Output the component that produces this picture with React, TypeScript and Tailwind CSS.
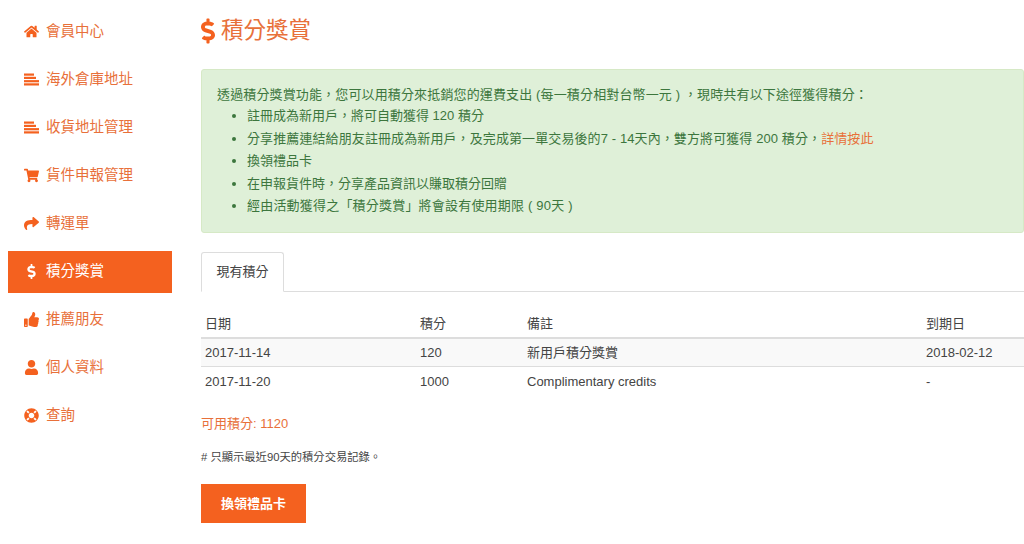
import { FaHome, FaShoppingCart, FaShare, FaDollarSign, FaThumbsUp, FaUser, FaLifeRing } from "react-icons/fa";

const font = "font-['Liberation_Sans','Noto_Sans_CJK_TC',sans-serif]";

function Bars({ className }: { className?: string }) {
  return (
    <svg viewBox="0 0 15 12" className={className} fill="currentColor">
      <rect x="0" y="0" width="10" height="2.2" />
      <rect x="0" y="3.3" width="12" height="2.2" />
      <rect x="0" y="6.6" width="15" height="2.2" />
      <rect x="0" y="9.8" width="15" height="2.2" />
    </svg>
  );
}

const nav = [
  { icon: FaHome, label: "會員中心" },
  { icon: Bars, label: "海外倉庫地址" },
  { icon: Bars, label: "收貨地址管理" },
  { icon: FaShoppingCart, label: "貨件申報管理" },
  { icon: FaShare, label: "轉運單" },
  { icon: FaDollarSign, label: "積分獎賞", active: true },
  { icon: FaThumbsUp, label: "推薦朋友" },
  { icon: FaUser, label: "個人資料" },
  { icon: FaLifeRing, label: "查詢" },
];
const cols = "grid grid-cols-[215px_107px_399px_1fr] items-center px-1";

export default function App() {
  return (
    <div lang="zh-Hant" className={`${font} w-[1024px] h-[544px] overflow-hidden bg-white flex text-[13px] text-[#444]`}>
      <aside className="w-[172px] shrink-0 pl-2 pt-[11px] flex flex-col gap-[6px]">
        {nav.map((n) => (
          <div
            key={n.label}
            className={`h-[42px] flex items-center pl-4 pb-[1px] text-[14.5px] ${n.active ? "bg-[#f4611f] text-white" : "text-[#e8703a]"}`}
          >
            <span className={`w-[22px] flex ${n.active ? "text-white" : "text-[#f4611f]"}`}>
              <n.icon className="w-[15px] h-[15px]" />
            </span>
            {n.label}
          </div>
        ))}
      </aside>
      <main className="w-[852px] shrink-0 pl-[29px]">
        <h1 className="h-[69px] pt-[14px] flex items-start text-[#e8703a] text-[22.5px] leading-[34px] gap-[6px]">
          <FaDollarSign className="w-[14px] h-[26px] mt-[4px] text-[#f4611f]" />
          積分獎賞
        </h1>
        <div className="h-[164px] rounded-[3px] bg-[#dff0d8] border border-[#d6e9c6] text-[#3c763d] pl-[15px] pt-[14px] leading-[22.5px]">
          <div className="leading-[21px] tracking-[0.14px]">透過積分獎賞功能，您可以用積分來抵銷您的運費支出 (每一積分相對台幣一元 ) ，現時共有以下途徑獲得積分：</div>
          <ul className="list-disc pl-[30px]">
            <li>註冊成為新用戶，將可自動獲得 120 積分</li>
            <li className="tracking-[0.1px]">分享推薦連結給朋友註冊成為新用戶，及完成第一單交易後的7 - 14天內，雙方將可獲得 200 積分，<span className="text-[#e8703a]">詳情按此</span></li>
            <li>換領禮品卡</li>
            <li>在申報貨件時，分享產品資訊以賺取積分回贈</li>
            <li className="tracking-[0.2px]">經由活動獲得之「積分獎賞」將會設有使用期限 ( 90天 )</li>
          </ul>
        </div>
        <div className="mt-[19px] h-[40px] border-b border-[#ddd] flex">
          <div className="w-[83px] h-[40px] border border-[#ddd] border-b-white rounded-t-[3px] bg-white flex items-center justify-center">現有積分</div>
        </div>
        <div className={`${cols} mt-[15px] h-[32px] pt-[3px] border-b-2 border-[#ddd]`}>
          <span>日期</span><span>積分</span><span>備註</span><span>到期日</span>
        </div>
        <div className={`${cols} h-[28px] pt-[1px] bg-[#f9f9f9] border-b border-[#ddd]`}>
          <span>2017-11-14</span><span>120</span><span>新用戶積分獎賞</span><span>2018-02-12</span>
        </div>
        <div className={`${cols} h-[28px] pt-[1px]`}>
          <span>2017-11-20</span><span>1000</span><span>Complimentary credits</span><span>-</span>
        </div>
        <div className="mt-[20px] text-[#e8703a] leading-[17px]">可用積分: 1120</div>
        <div className="mt-[17px] text-[11.3px] leading-[16px]"># 只顯示最近90天的積分交易記錄。</div>
        <button className="mt-[19px] w-[105px] h-[39px] bg-[#f4611f] text-white text-[13px] font-bold flex items-center justify-center">換領禮品卡</button>
      </main>
    </div>
  );
}
